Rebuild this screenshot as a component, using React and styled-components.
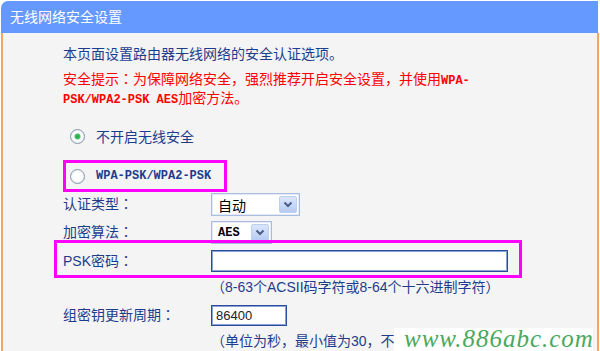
import React from 'react';
import styled, { createGlobalStyle } from 'styled-components';

const Global = createGlobalStyle`
  html, body { margin: 0; padding: 0; background: #fff; }
  body { font-family: "Liberation Sans", "Noto Sans CJK SC", sans-serif; }
  * { box-sizing: border-box; }
`;

const BLUE = '#1f3c8c';
const MAGENTA = '#ff00ff';
const ORANGE = '#f6a65e';

const Page = styled.div`
  position: relative;
  width: 600px;
  height: 351px;
  overflow: hidden;
  padding-top: 1px;
`;

const Panel = styled.div`
  margin-left: 1px;
  width: 598px;
  height: 350px;
  display: flex;
  flex-direction: column;
`;

const Header = styled.div`
  height: 32px;
  margin-right: 1px;
  background: #6699ff;
  border-top-left-radius: 7px;
  color: #fff;
  font-size: 14px;
  line-height: 32px;
  padding-left: 9px;
`;

const Body = styled.div`
  flex: 1;
  background: #f4f4f4;
  border-left: 2px solid ${ORANGE};
  border-right: 2px solid ${ORANGE};
  padding: 12px 0 0 60px;
  display: flex;
  flex-direction: column;
  align-items: flex-start;
`;

const Intro = styled.p`
  margin: 0;
  color: ${BLUE};
  font-size: 14px;
  line-height: 19px;
`;

const Warning = styled.p`
  margin: 6px 0 0;
  color: #ff0000;
  font-size: 14px;
  line-height: 19px;
`;

const Mono = styled.span`
  font-family: "Liberation Mono", monospace;
  font-size: 12px;
  font-weight: bold;
  line-height: 0;
`;

const Punct = styled.span`
  font-family: "Noto Sans CJK JP", sans-serif;
  line-height: 0;
`;

const RadioRow = styled.div`
  display: flex;
  align-items: center;
  gap: 11px;
  height: ${p => p.$h || 24}px;
  margin-top: ${p => p.$mt || 0}px;
  padding-left: ${p => p.$pl || 7}px;
  color: ${BLUE};
  font-size: 14px;
`;

const Highlight = styled(RadioRow)`
  width: 164px;
  border: 3px solid ${MAGENTA};
`;

const Radio = styled.span`
  width: 15px;
  height: 15px;
  border-radius: 50%;
  border: 1px solid #8798ab;
  background: radial-gradient(circle at 50% 50%,
    ${p => (p.$checked ? '#27a845 0, #3fc05a 2.5px, #ffffff 3.5px, ' : '')}#ffffff 40%, #dce1e7 100%);
  flex: none;
`;

const Row = styled.div`
  position: relative;
  display: flex;
  align-items: center;
  height: ${p => p.$h}px;
  margin-top: ${p => p.$mt}px;
`;

const Label = styled.span`
  width: 148px;
  flex: none;
  color: ${BLUE};
  font-size: 14px;
  line-height: 19px;
`;

const Annotation = styled.span`
  position: absolute;
  left: -9px;
  top: -10px;
  width: 468px;
  height: 38px;
  border: 3px solid ${MAGENTA};
  pointer-events: none;
`;

const Select = styled.div`
  width: ${p => p.$w}px;
  height: 23px;
  border: 1px solid #a9bedf;
  box-shadow: inset 0 0 0 1px #e4ebf6;
  background: #fff;
  display: flex;
  align-items: center;
  justify-content: space-between;
  padding: 2px;
`;

const SelectText = styled.span`
  padding-left: 4px;
  color: #000;
  font-size: 14px;
`;

const SelectMono = styled(SelectText)`
  font-family: "Liberation Mono", monospace;
  font-size: 12px;
  font-weight: bold;
`;

const Arrow = styled.span`
  width: 18px;
  height: 17px;
  border-radius: 2px;
  border: 1px solid #bccfee;
  background: linear-gradient(#dbe6fb, #b7ccf3);
  display: flex;
  align-items: center;
  justify-content: center;
`;

const TextInput = styled.input`
  width: ${p => p.$w}px;
  height: ${p => p.$h}px;
  border: 1px solid #2b4b9f;
  box-shadow: inset 0 0 0 1px #8aa1d4;
  background: #fff;
  padding: 0 4px;
  font-family: "Liberation Sans", sans-serif;
  font-size: 13px;
  color: #222;
  outline: none;
`;

const Hint = styled.p`
  margin: ${p => p.$mt}px 0 0 148px;
  color: ${BLUE};
  font-size: 14px;
  line-height: 18px;
  white-space: nowrap;
`;

const Watermark = styled.div`
  position: absolute;
  left: 394px;
  bottom: 0;
  width: 199px;
  height: 23px;
  background: #fff;
  color: #4aa85c;
  font-family: "Liberation Serif", serif;
  font-style: italic;
  font-size: 25px;
  line-height: 22px;
  letter-spacing: 1px;
  padding-left: 10px;
  white-space: nowrap;
`;

const Chevron = () => (
  <svg width="10" height="7" viewBox="0 0 10 7">
    <path d="M1.5 1.5 L5 5 L8.5 1.5" fill="none" stroke="#4a5f86" strokeWidth="2" />
  </svg>
);

export default function App() {
  return (
    <>
      <Global />
      <Page>
        <Panel>
          <Header>无线网络安全设置</Header>
          <Body>
            <Intro>本页面设置路由器无线网络的安全认证选项<Punct>。</Punct></Intro>
            <Warning>
              安全提示<Punct>：</Punct>为保障网络安全<Punct>，</Punct>强烈推荐开启安全设置<Punct>，</Punct>并使用<Mono>WPA-</Mono>
              <br />
              <Mono>PSK/WPA2-PSK AES</Mono>加密方法<Punct>。</Punct>
            </Warning>
            <RadioRow $mt={16}>
              <Radio $checked />
              <span>不开启无线安全</span>
            </RadioRow>
            <Highlight $h={32} $mt={12} $pl={4}>
              <Radio />
              <Mono>WPA-PSK/WPA2-PSK</Mono>
            </Highlight>
            <Row $h={23} $mt={1}>
              <Label>认证类型<Punct>：</Punct></Label>
              <Select $w={89}>
                <SelectText>自动</SelectText>
                <Arrow><Chevron /></Arrow>
              </Select>
            </Row>
            <Row $h={23} $mt={5}>
              <Label>加密算法<Punct>：</Punct></Label>
              <Select $w={61}>
                <SelectMono>AES</SelectMono>
                <Arrow><Chevron /></Arrow>
              </Select>
            </Row>
            <Row $h={22} $mt={6}>
              <Annotation />
              <Label>PSK密码<Punct>：</Punct></Label>
              <TextInput $w={297} $h={22} defaultValue="" readOnly />
            </Row>
            <Hint $mt={6}>（8-63个ACSII码字符或8-64个十六进制字符）</Hint>
            <Row $h={21} $mt={9}>
              <Label>组密钥更新周期<Punct>：</Punct></Label>
              <TextInput $w={76} $h={21} defaultValue="86400" readOnly />
            </Row>
            <Hint $mt={6}>（单位为秒<Punct>，</Punct>最小值为30<Punct>，</Punct>不</Hint>
          </Body>
        </Panel>
        <Watermark>www.886abc.com</Watermark>
      </Page>
    </>
  );
}
